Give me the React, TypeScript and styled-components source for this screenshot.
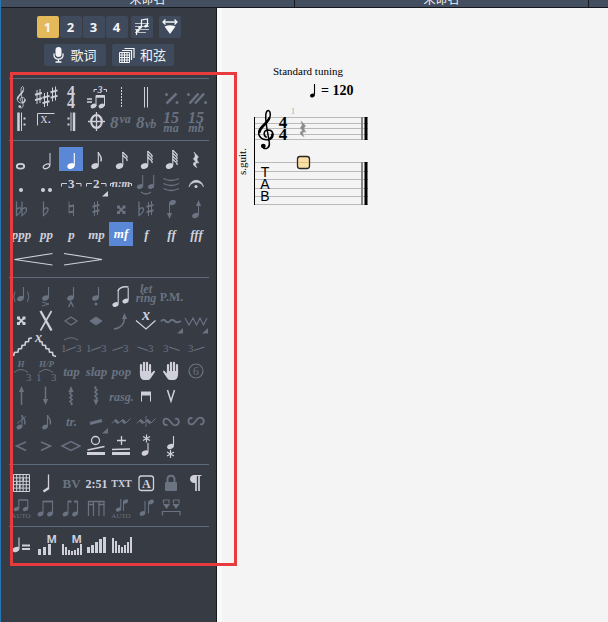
import React, { ReactNode } from "react";
import styled, { createGlobalStyle, css } from "styled-components";

const serif = '"Liberation Serif", "Times New Roman", serif';
const sans = '"Open Sans", "Noto Sans CJK SC", sans-serif';

const color = {
  panel: "#373b44",
  bar: "#434f60",
  button: "#3f4b5c",
  edge: "#15181d",
  line: "#5c6a7c",
  bright: "#cfd0dc",
  dim: "#697381",
  selected: "#5a88d6",
  voice: "#e4b95a",
  mark: "#e73b3d",
  sheet: "#f4f4f4",
};

const GlobalStyle = createGlobalStyle`
  *, *::before, *::after { box-sizing: border-box; }
  body { margin: 0; background: ${color.sheet}; }
  button { font: inherit; color: inherit; border: 0; padding: 0; background: none; cursor: pointer; }
`;

const Shell = styled.div`
  display: flex;
  flex-direction: column;
  min-height: 100vh;
  border-left: 1px solid #2877b5;
  font-family: ${sans};
`;

const TabBar = styled.nav`
  display: flex;
  height: 8px;
  overflow: hidden;
  background: ${color.bar};
  border-bottom: 1px solid ${color.edge};
`;

const Tab = styled.button`
  display: flex;
  flex: 0 0 294px;
  align-items: flex-end;
  justify-content: center;
  height: 7px;
  padding-bottom: 1px;
  overflow: hidden;
  border-right: 1px solid ${color.edge};
  color: #f2f4f6;
  font: 12px/14px "Noto Sans CJK SC", sans-serif;
`;

const Workspace = styled.div`
  display: flex;
  flex: 1;
`;

const Sidebar = styled.aside`
  display: flex;
  flex-direction: column;
  flex: 0 0 216px;
  padding-top: 8px;
  background: ${color.panel};
  border-right: 1px solid ${color.edge};
`;

const HeaderRow = styled.div`
  display: flex;
  justify-content: center;
  gap: 6px;
  margin-bottom: 6px;
`;

const VoiceGroup = styled.div`
  display: flex;
  gap: 1px;
  margin-right: -3px;
`;

const headerButton = css`
  display: flex;
  align-items: center;
  justify-content: center;
  height: 22px;
  background: ${color.button};
  color: #f4f5f7;
`;

const VoiceButton = styled.button<{ $active?: boolean }>`
  ${headerButton}
  width: 22px;
  border-radius: 2px;
  font: 700 13px/22px ${sans};
  ${(p) => p.$active && css`background: ${color.voice};`}
`;

const IconButton = styled.button`
  ${headerButton}
  width: 22px;
  border-radius: 2px;
`;

const WideButton = styled.button`
  ${headerButton}
  width: 62px;
  gap: 5px;
  border-radius: 2px;
  font: 13px/22px "Noto Sans CJK SC", sans-serif;
`;

const Palette = styled.div`
  position: relative;
  margin-top: 6px;
  padding-left: 8px;
`;

const Highlight = styled.div`
  position: absolute;
  inset: -6px -21px -3px 9px;
  border: 3px solid ${color.mark};
  pointer-events: none;
`;

const Section = styled.section`
  display: grid;
  grid-template-columns: repeat(8, 25px);
  grid-auto-rows: 25px;
  width: 200px;
  padding: 6px 0 5px;
  border-top: 1px solid ${color.line};
`;

const ToolButton = styled.button<{ $dim?: boolean; $active?: boolean; $wide?: boolean; $size?: number; $upright?: boolean }>`
  display: flex;
  align-items: center;
  justify-content: center;
  grid-column: span ${(p) => (p.$wide ? 2 : 1)};
  color: ${(p) => (p.$active ? "#ffffff" : p.$dim ? color.dim : color.bright)};
  font: ${(p) => (p.$upright ? "normal" : "italic")} 700 ${(p) => p.$size ?? 13}px/24px ${serif};
  white-space: nowrap;
  ${(p) => p.$active && css`
    background: ${color.selected};
    background-clip: content-box;
    padding: 0 1px 1px 0;
  `}
  svg { flex: none; display: block; overflow: visible; }
`;

const Blank = styled.span`
  grid-column: span 1;
`;

const Sheet = styled.main`
  flex: 1;
  min-width: 0;
  padding: 56px 0 0 15px;
  background: ${color.sheet};
  border-left: 5px solid #f9f9f9;
  color: #000;
`;

const Tuning = styled.h1`
  margin: 0;
  padding-left: 36px;
  font: 400 11px/14px ${serif};
`;

const Tempo = styled.div`
  display: flex;
  align-items: center;
  gap: 5px;
  padding-left: 73px;
  margin-top: 4px;
  font: 700 14px/18px ${serif};
`;

const StaffDrawing = styled.svg`
  display: block;
  margin-top: 5px;
  overflow: visible;
`;

/* ---------- drawing helpers ---------- */

const Ico = ({ children, w = 25 }: { children: ReactNode; w?: number }) => (
  <svg width={w} height={25} viewBox={`0 0 ${w} 25`} fill="none" stroke="currentColor" strokeWidth={1} aria-hidden="true">
    {children}
  </svg>
);

type GlyphProps = { x: number; y: number; size: number; children: ReactNode; italic?: boolean; plain?: boolean; mid?: boolean; family?: string };
const T = ({ x, y, size, children, italic, plain, mid, family = serif }: GlyphProps) => (
  <text
    x={x}
    y={y}
    fontSize={size}
    fontFamily={family}
    fontWeight={plain ? 400 : 700}
    fontStyle={italic ? "italic" : "normal"}
    textAnchor={mid ? "middle" : "start"}
    fill="currentColor"
    stroke="none"
  >
    {children}
  </text>
);

const Head = ({ x, y, r = 4 }: { x: number; y: number; r?: number }) => (
  <ellipse cx={x} cy={y} rx={r} ry={r * 0.72} transform={`rotate(-25 ${x} ${y})`} fill="currentColor" stroke="none" />
);

const Note = ({ x, y, top, r = 3.8, flags = 0 }: { x: number; y: number; top: number; r?: number; flags?: number }) => {
  const sx = x + r - 0.5;
  return (
    <>
      <Head x={x} y={y} r={r} />
      <path d={`M${sx} ${y - 1}V${top}`} strokeWidth={1.1} />
      {Array.from({ length: flags }, (_, i) => (
        <path
          key={i}
          d={
            flags === 1
              ? `M${sx} ${top}c.5 3.5 4.6 4.5 2.6 9.5`
              : `M${sx} ${top + i * 3}c.5 2.5 5 2.5 4.3 6`
          }
          strokeWidth={1.3}
        />
      ))}
    </>
  );
};

const Sharp = ({ x, y }: { x: number; y: number }) => (
  <g transform={`translate(${x} ${y})`}>
    <path d="M-1.5-6.5V7.5M1.5-7.5V6.5" />
    <path d="M-3.5-1.8L3.5-3.6M-3.5 3.6L3.5 1.8" strokeWidth={2} />
  </g>
);

const Flat = ({ x, y }: { x: number; y: number }) => (
  <path d={`M${x} ${y - 10}V${y + 4}C${x + 3} ${y + 2} ${x + 5} ${y} ${x + 4.5} ${y - 2.5}C${x + 4} ${y - 4.5} ${x + 1} ${y - 4} ${x} ${y - 1.5}`} strokeWidth={1.3} />
);

const Clef = () => (
  <>
    <path d="M9.2 28C5.5 26.5 5.8 20.5 10.5 20.5C16.5 20.5 17.5 29 10.5 30.2C4.5 31 .8 27 1.2 22.5C1.8 16 12.5 12.5 12.8 5.5C12.9 .5 9.8-.5 8.6 3.5C7.5 7.5 8.3 12 9.2 17.5L11.8 33C12.6 38.5 8.5 40 5.8 38.5" strokeWidth={1.5} />
    <path d="M1.8 23.5C2.2 17 10.5 14 12 8M14.8 24C15.3 27 13.5 29.5 10.5 30" strokeWidth={2.4} />
    <circle cx="5.8" cy="36.6" r="2.4" fill="currentColor" stroke="none" />
  </>
);

const Rest = () => (
  <path d="M1 0L5.5 5C3.5 7 3.5 8 6 11C2.5 10.2 1.6 12.6 4 15.6C-.8 13.6-.6 9.8 3 10L.3 6.8C2.7 4.8 2.4 3 1 0Z" fill="currentColor" strokeWidth={0.5} />
);

const Corner = () => <path d="M24 19V24.5H18Z" fill="currentColor" stroke="none" />;
const DoubleSharp = () => (
  <>
    <path d="M9 9.5L15.5 16M15.5 9.5L9 16" strokeWidth={1.8} />
    <path d="M8 8.5h3v3H8zM13.5 8.5h3v3h-3zM8 14h3v3H8zM13.5 14h3v3h-3z" fill="currentColor" stroke="none" />
  </>
);
const Up = ({ x, y }: { x: number; y: number }) => <path d={`M${x} ${y}l2.6 6h-5.2z`} fill="currentColor" stroke="none" />;
const Down = ({ x, y }: { x: number; y: number }) => <path d={`M${x} ${y}l2.6-6h-5.2z`} fill="currentColor" stroke="none" />;
const Star = ({ x, y }: { x: number; y: number }) => <path d={`M${x} ${y - 4}v8M${x - 3.5} ${y - 2}l7 4M${x - 3.5} ${y + 2}l7-4`} strokeWidth={1.2} />;
const Hand = () => (
  <>
    <path d="M7 13.5V6M10 13V3.8M13 13V3.8M16 13.5V6" strokeWidth={2.2} strokeLinecap="round" />
    <path d="M5.9 12H17.1V14.5L19.5 12C20.5 11.3 21.5 12.2 20.8 13.2L16.5 19.5Q15.5 21 13.5 21H9.5Q5.9 20 5.9 15Z" fill="currentColor" stroke="none" />
  </>
);
const Mordent = () => (
  <>
    <path d="M3 14.5L6.5 10.5L10 14L13.5 10.5L17 14L21.5 9.5" />
    <path d="M6 11L9.5 14.2M13 11L16.5 14.2" strokeWidth={2.6} />
  </>
);
const Turn = () => (
  <path d="M8.5 9.5C6 8 4.3 10 4.5 12.5C4.8 16 8.5 16.5 11 13C13.5 9 16 7.5 18.5 9.5C21 12 19.5 16.5 16 15" strokeWidth={1.8} />
);
const Slide = ({ one, arc }: { one?: boolean; arc?: boolean }) => (
  <Ico>
    {one && <T x={2} y={18} size={11} plain>1</T>}
    <path d="M7 16.5L17 13" strokeWidth={1.3} />
    <T x={17} y={18} size={11} plain>3</T>
    {arc && <path d="M5 6Q12 1.5 19 6" />}
  </Ico>
);

/* ---------- palette content ---------- */

type Item = {
  name: string;
  icon?: ReactNode;
  text?: string;
  size?: number;
  upright?: boolean;
  dim?: boolean;
  active?: boolean;
  wide?: boolean;
  blank?: boolean;
};

const bars = (list: number[], x0: number, step: number, width: number, bottom: number) =>
  list.map((top, i) => <rect key={i} x={x0 + i * step} y={top} width={width} height={bottom - top} fill="currentColor" stroke="none" />);

const sections: Item[][] = [
  [
    { name: "Clef", icon: <Ico><g transform="translate(7.5 1) scale(.56)" strokeWidth={2}><Clef /></g></Ico> },
    { name: "Key signature", icon: <Ico><Sharp x={4.5} y={11.5} /><Sharp x={12} y={14.5} /><Sharp x={20} y={9} /></Ico> },
    { name: "Time signature", icon: <Ico><T x={12} y={12} size={16} mid>4</T><T x={12} y={23} size={16} mid>4</T></Ico> },
    {
      name: "Triplet feel",
      icon: <Ico><path d="M3 14h5M3 17h5" strokeWidth={1.3} /><T x={13.5} y={8} size={10} italic>3</T><path d="M10 7V4.5H13M19.5 4.5H22.5V7" /><Head x={9.5} y={21} r={3} /><Head x={17.5} y={21} r={3} /><path d="M12 21V10.5H20.5V21" /><path d="M12 11.5h8.5" strokeWidth={2.5} /></Ico>,
    },
    { name: "Free time", icon: <Ico><path d="M12.5 2V23" strokeDasharray="2 1" /></Ico> },
    { name: "Double bar", icon: <Ico><path d="M10.5 2V22.5M13.5 2V22.5" /></Ico> },
    { name: "Repeat bar", dim: true, icon: <Ico><path d="M7.5 18.5L17.5 8.5" strokeWidth={2.5} /><circle cx="7.5" cy="9.5" r="1.5" fill="currentColor" stroke="none" /><circle cx="18" cy="17.5" r="1.5" fill="currentColor" stroke="none" /></Ico> },
    { name: "Repeat two bars", dim: true, icon: <Ico><path d="M5.5 18.5L14.5 8.5M11 18.5L20 8.5" strokeWidth={2.5} /><circle cx="4.5" cy="9.5" r="1.5" fill="currentColor" stroke="none" /><circle cx="21.5" cy="17.5" r="1.5" fill="currentColor" stroke="none" /></Ico> },
    { name: "Repeat start", icon: <Ico><path d="M9.5 2.5V21" strokeWidth={2.5} /><path d="M12.5 2.5V21" /><path d="M14.5 8.5h2M14.5 14.5h2" strokeWidth={2} /></Ico> },
    { name: "Alternate ending", icon: <Ico><path d="M3.5 15.5V3.5H20.5" /><T x={6.5} y={13} size={14} plain>x.</T></Ico> },
    { name: "Repeat end", icon: <Ico><path d="M15 2.5V21" strokeWidth={2.5} /><path d="M12 2.5V21" /><path d="M8.5 8.5h2M8.5 14.5h2" strokeWidth={2} /></Ico> },
    { name: "Coda", icon: <Ico><ellipse cx="12.5" cy="11.5" rx="5.3" ry="6.3" strokeWidth={2.2} /><path d="M4 11.5h17M12.5 2v19" strokeWidth={1.3} /></Ico> },
    { name: "Octave up", dim: true, icon: <Ico><T x={1} y={18} size={17} italic>8</T><T x={10.5} y={13} size={12} italic>va</T></Ico> },
    { name: "Octave down", dim: true, icon: <Ico><T x={2} y={18} size={17} italic>8</T><T x={11} y={18} size={12} italic>vb</T></Ico> },
    { name: "Two octaves up", dim: true, icon: <Ico><T x={12} y={13} size={16} mid italic>15</T><T x={12} y={22} size={12} mid italic>ma</T></Ico> },
    { name: "Two octaves down", dim: true, icon: <Ico><T x={12} y={13} size={16} mid italic>15</T><T x={12} y={22} size={12} mid italic>mb</T></Ico> },
  ],
  [
    { name: "Whole note", icon: <Ico><ellipse cx="11.5" cy="19.3" rx="3.7" ry="2.4" strokeWidth={1.8} /></Ico> },
    { name: "Half note", icon: <Ico><ellipse cx="12.5" cy="19.3" rx="3.4" ry="2" strokeWidth={1.3} transform="rotate(-25 12.5 19.3)" /><path d="M16 18V6" /></Ico> },
    { name: "Quarter note", active: true, icon: <Ico><Note x={12} y={19} top={6} /></Ico> },
    { name: "Eighth note", icon: <Ico><Note x={11} y={19} top={5} flags={1} /></Ico> },
    { name: "Sixteenth note", icon: <Ico><Note x={10.5} y={19} top={5} flags={2} /></Ico> },
    { name: "Thirty-second note", icon: <Ico><Note x={10.5} y={19} top={4} flags={3} /></Ico> },
    { name: "Sixty-fourth note", icon: <Ico><Note x={10.5} y={19} top={3} flags={4} /></Ico> },
    { name: "Rest", icon: <Ico><g transform="translate(9 5)"><Rest /></g></Ico> },
    { name: "Dotted", icon: <Ico><circle cx="12" cy="18" r="2" fill="currentColor" stroke="none" /></Ico> },
    { name: "Double dotted", icon: <Ico><circle cx="9" cy="18" r="2" fill="currentColor" stroke="none" /><circle cx="16" cy="18" r="2" fill="currentColor" stroke="none" /></Ico> },
    { name: "Triplet", icon: <Ico><path d="M2.5 14.5V11.5H8M17 11.5H22V14.5" /><T x={12.3} y={15.5} size={13} mid>3</T></Ico> },
    { name: "Tuplet", icon: <Ico><path d="M2.5 14.5V11.5H8M17 11.5H22V14.5" /><T x={12.3} y={15.5} size={13} mid>2</T><Corner /></Ico> },
    { name: "Custom tuplet", icon: <Ico><path d="M1.5 14V11.5H4M20.5 11.5H22.5V14" /><T x={12} y={14.5} size={11} mid italic>n:m</T></Ico> },
    { name: "Tie", dim: true, icon: <Ico><Note x={6} y={14.5} top={3} r={3.2} /><Note x={17} y={14.5} top={3} r={3.2} /><path d="M7 20Q12 24 17 20" strokeWidth={1.3} /></Ico> },
    { name: "Tie chord", dim: true, icon: <Ico><path d="M4.5 6.5Q12 10.5 20 6.5M4.5 11.5Q12 15.5 20 11.5M4.5 16.5Q12 20.5 20 16.5" strokeWidth={1.3} /></Ico> },
    { name: "Fermata", icon: <Ico><path d="M5 15C6.5 6 18 6 19.5 15C17 8.8 7.5 8.8 5 15Z" fill="currentColor" strokeWidth={0.5} /><circle cx="12" cy="14.5" r="1.5" fill="currentColor" stroke="none" /></Ico> },
    { name: "Double flat", dim: true, icon: <Ico><Flat x={7.5} y={14.5} /><Flat x={13} y={14.5} /></Ico> },
    { name: "Flat", dim: true, icon: <Ico><Flat x={9.5} y={14.5} /></Ico> },
    { name: "Natural", dim: true, icon: <Ico><path d="M10 4.5V16M14.5 7.5V19" /><path d="M10 9.5L14.5 8.5M10 15.5L14.5 14.5" strokeWidth={2} /></Ico> },
    { name: "Sharp", dim: true, icon: <Ico><Sharp x={12} y={11.5} /></Ico> },
    { name: "Double sharp", dim: true, icon: <Ico><DoubleSharp /></Ico> },
    { name: "Enharmonic", dim: true, icon: <Ico><Flat x={5} y={14.5} /><Sharp x={16} y={11.5} /></Ico> },
    { name: "Semitone down", dim: true, icon: <Ico><Head x={13.5} y={5.5} r={3.5} /><path d="M10.5 6.5V17" /><Down x={10.5} y={22} /></Ico> },
    { name: "Semitone up", dim: true, icon: <Ico><Head x={11.5} y={18.5} r={3.5} /><path d="M14.5 17.5V7" /><Up x={14.5} y={3} /></Ico> },
    { name: "Pianississimo", text: "ppp" },
    { name: "Pianissimo", text: "pp" },
    { name: "Piano", text: "p" },
    { name: "Mezzo piano", text: "mp" },
    { name: "Mezzo forte", text: "mf", active: true },
    { name: "Forte", text: "f" },
    { name: "Fortissimo", text: "ff" },
    { name: "Fortississimo", text: "fff" },
    { name: "Crescendo", wide: true, icon: <Ico w={50}><path d="M43.5 6.5L5.5 12.5L43.5 18" strokeWidth={1.2} /></Ico> },
    { name: "Decrescendo", wide: true, icon: <Ico w={50}><path d="M5 6.5L43 12.5L5 18" strokeWidth={1.2} /></Ico> },
  ],
  [
    { name: "Ghost note", dim: true, icon: <Ico><Note x={11.5} y={14.5} top={3} r={3.5} /><path d="M6 7.5Q3.5 12.5 6 18M18.5 7.5Q21 12.5 18.5 18" /></Ico> },
    { name: "Accent", dim: true, icon: <Ico><Note x={11.5} y={14} top={3} r={3.5} /><path d="M8 18L15 20L8 22" /></Ico> },
    { name: "Heavy accent", dim: true, icon: <Ico><Note x={11.5} y={14} top={3} r={3.5} /><path d="M9.5 23L12 18L14.5 23" strokeWidth={1.3} /></Ico> },
    { name: "Staccato", dim: true, icon: <Ico><Note x={11.5} y={14} top={3} r={3.5} /><circle cx="12" cy="20" r="1.5" fill="currentColor" stroke="none" /></Ico> },
    { name: "Legato", icon: <Ico><Note x={6.5} y={20.5} top={6} r={3.2} /><Note x={16.5} y={17} top={4} r={3.2} /><path d="M9 7Q11 2 19.5 3" strokeWidth={1.5} /></Ico> },
    { name: "Let ring", dim: true, icon: <Ico><T x={12} y={9} size={12} mid italic>let</T><T x={12} y={18} size={12} mid italic>ring</T></Ico> },
    { name: "Palm mute", text: "P.M.", upright: true, size: 12, dim: true },
    { name: "", blank: true },
    { name: "Dead note", icon: <Ico><g transform="translate(0 -1)"><DoubleSharp /></g></Ico> },
    { name: "Slap body", icon: <Ico><path d="M6.5 2L17.5 21.5" strokeWidth={2.4} /><path d="M17.5 2L6.5 21.5" strokeWidth={1.6} /></Ico> },
    { name: "Natural harmonic", dim: true, icon: <Ico><path d="M6 12L12 8L18 12L12 16Z" strokeWidth={1.2} /></Ico> },
    { name: "Artificial harmonic", dim: true, icon: <Ico><path d="M6 12L12 8L18 12L12 16Z" fill="currentColor" /></Ico> },
    { name: "Bend", dim: true, icon: <Ico><path d="M5 20Q15 19 15.5 9" strokeWidth={1.5} /><Up x={15.5} y={4} /></Ico> },
    { name: "Whammy bar", icon: <Ico><T x={12} y={11} size={16} mid italic>x</T><path d="M2 11.5L12 20L21.5 11.5" strokeWidth={1.2} /></Ico> },
    { name: "Vibrato", dim: true, icon: <Ico><path d="M2 12.5Q4 9.5 6.5 12T11 12T15.5 12T22 12" strokeWidth={2} /><Corner /></Ico> },
    { name: "Wide vibrato", dim: true, icon: <Ico><path d="M1 9L5 16L9 9L12.5 16L16 9L19.5 16L23 9" strokeWidth={1.2} /><Corner /></Ico> },
    { name: "Slide in above", icon: <Ico><path d="M4.5 22L5.5 18.5L9 18L9.5 15L12.5 14.5L13 11.5L16 11L16.5 8L19.5 7.5L20 4.5L23 4" strokeWidth={1.6} /></Ico> },
    { name: "Slide out below", icon: <Ico><T x={1} y={8} size={14} italic>x</T><path d="M5 7.5L8 8L8.5 11L11.5 11.5L12 14.5L15 15L15.5 18L18.5 18.5L19 21.5L22 22.5" strokeWidth={1.6} /></Ico> },
    { name: "Legato slide", dim: true, icon: <Slide one arc /> },
    { name: "Shift slide", dim: true, icon: <Slide one /> },
    { name: "Slide in from below", dim: true, icon: <Ico><path d="M3.5 16.5L14 13" strokeWidth={1.3} /><T x={14} y={18} size={11} plain>3</T></Ico> },
    { name: "Slide in from above", dim: true, icon: <Ico><path d="M3.5 13L14 16.5" strokeWidth={1.3} /><T x={14} y={18} size={11} plain>3</T></Ico> },
    { name: "Slide out downwards", dim: true, icon: <Ico><T x={4} y={18} size={11} plain>3</T><path d="M10 13L20.5 16.5" strokeWidth={1.3} /></Ico> },
    { name: "Slide out upwards", dim: true, icon: <Ico><T x={4} y={18} size={11} plain>3</T><path d="M10 16.5L20.5 13" strokeWidth={1.3} /></Ico> },
    { name: "Hammer on", dim: true, icon: <Ico><T x={12} y={8} size={9} mid italic>H</T><path d="M5 13.5Q12 7.5 19 13.5" /><T x={17} y={22} size={11} plain>3</T></Ico> },
    { name: "Hammer on or pull off", dim: true, icon: <Ico><T x={12.5} y={8} size={9} mid italic>H/P</T><path d="M5 13.5Q12 7.5 19 13.5" /><T x={2} y={22} size={11} plain>1</T><T x={17} y={22} size={11} plain>3</T></Ico> },
    { name: "Tapping", text: "tap", dim: true },
    { name: "Slapping", text: "slap", dim: true },
    { name: "Popping", text: "pop", dim: true },
    { name: "Left hand fingering", icon: <Ico><Hand /></Ico> },
    { name: "Right hand fingering", icon: <Ico><g transform="translate(25 0) scale(-1 1)"><Hand /></g></Ico> },
    { name: "String number", dim: true, icon: <Ico><circle cx="12" cy="12" r="7" strokeWidth={1.2} /><T x={12} y={16} size={12} mid plain>6</T></Ico> },
    { name: "Arpeggio up", dim: true, icon: <Ico><path d="M12.5 7V21" strokeWidth={1.5} /><Up x={12.5} y={2} /></Ico> },
    { name: "Arpeggio down", dim: true, icon: <Ico><path d="M11.5 2.5V16" strokeWidth={1.5} /><Down x={11.5} y={21} /></Ico> },
    { name: "Brush up", dim: true, icon: <Ico><path d="M12 8l-1 1.5l2 2l-2 2l2 2l-2 2l2 2l-1 1.5" strokeWidth={1.7} /><Up x={12} y={2} /></Ico> },
    { name: "Brush down", dim: true, icon: <Ico><path d="M12 2.5l-1 1.5l2 2l-2 2l2 2l-2 2l2 2l-1 1.5" strokeWidth={1.7} /><Down x={12} y={21.5} /></Ico> },
    { name: "Rasgueado", text: "rasg.", size: 12, dim: true },
    { name: "Down stroke", icon: <Ico><path d="M7.5 17.5V8M16.5 17.5V8" /><path d="M7 9.5H17" strokeWidth={4} /></Ico> },
    { name: "Up stroke", icon: <Ico><path d="M8.5 6L12 17L15.5 6" strokeWidth={1.5} /></Ico> },
    { name: "", blank: true },
    { name: "Grace note before beat", dim: true, icon: <Ico><Note x={10.5} y={18} top={6} r={3} flags={1} /><path d="M8 14.5L17 7.5" /></Ico> },
    { name: "Grace note on beat", dim: true, icon: <Ico><Note x={11} y={18} top={6} r={3} flags={1} /></Ico> },
    { name: "Trill", text: "tr.", dim: true },
    { name: "Tremolo picking", dim: true, icon: <Ico><path d="M6 14.5L18 11.5" strokeWidth={3} /><Corner /></Ico> },
    { name: "Upper mordent", dim: true, icon: <Ico><Mordent /></Ico> },
    { name: "Lower mordent", dim: true, icon: <Ico><Mordent /><path d="M12 7V18" /></Ico> },
    { name: "Turn", dim: true, icon: <Ico><g transform="translate(0 25) scale(1 -1)"><Turn /></g></Ico> },
    { name: "Inverted turn", dim: true, icon: <Ico><Turn /></Ico> },
    { name: "Fade in", dim: true, icon: <Ico><path d="M17 8L7.5 12L17 16.5" strokeWidth={1.5} /></Ico> },
    { name: "Fade out", dim: true, icon: <Ico><path d="M7 8L16.5 12L7 16.5" strokeWidth={1.5} /></Ico> },
    { name: "Volume swell", dim: true, icon: <Ico><path d="M3 12L12 7.5L21 12L12 16.5Z" strokeWidth={1.4} /></Ico> },
    { name: "Wah open", icon: <Ico><circle cx="11.5" cy="6.5" r="4" strokeWidth={1.3} /><path d="M3.5 16L20.5 12.5" strokeWidth={1.5} /><path d="M3 19.5H21" strokeWidth={3} /></Ico> },
    { name: "Wah closed", icon: <Ico><path d="M12.5 2V11M8 6.5H17" strokeWidth={1.3} /><path d="M3 15.5L21 15" strokeWidth={1.5} /><path d="M3 19.5H21" strokeWidth={3} /></Ico> },
    { name: "Pick scrape above", icon: <Ico><Star x={12.5} y={4.5} /><Note x={11} y={19} top={9} r={3.5} /></Ico> },
    { name: "Pick scrape below", icon: <Ico><Note x={11.5} y={12.5} top={2} r={3.5} /><Star x={11.5} y={20} /></Ico> },
  ],
  [
    { name: "Chord diagram", icon: <Ico><path d="M4.5 3.5H20.5V20.5H4.5ZM7.7 3.5V20.5M10.9 3.5V20.5M14.1 3.5V20.5M17.3 3.5V20.5M4.5 6.9H20.5M4.5 10.3H20.5M4.5 13.7H20.5M4.5 17.1H20.5" /><path d="M7 12h1.5M13.5 8.5h1.5M10 15.5h1.5" strokeWidth={2.5} /></Ico> },
    { name: "Slash notation", icon: <Ico><path d="M14.5 3.5V17.5" strokeWidth={1.3} /><path d="M9.5 20.5L14.8 17" strokeWidth={2.5} /></Ico> },
    { name: "Barre", text: "BV", size: 13, upright: true, dim: true },
    { name: "Timer", text: "2:51", size: 12, upright: true },
    { name: "Text", text: "TXT", size: 10, upright: true },
    { name: "Section marker", icon: <Ico><rect x="5" y="5" width="14.5" height="14.5" rx="2.5" strokeWidth={1.3} /><T x={12.3} y={16.5} size={12} mid>A</T></Ico> },
    { name: "Lock", dim: true, icon: <Ico><path d="M8.500 12V8.5C8.5 3.5 15.5 3.5 15.5 8.5V12" strokeWidth={2} /><rect x="6" y="11" width="12" height="9" rx="1" fill="currentColor" stroke="none" /></Ico> },
    { name: "Line break", icon: <Ico><path d="M12 4H10.5C4.5 4 4.5 12 10.5 12H12Z" fill="currentColor" stroke="none" /><path d="M12 4V20M15 4V20" strokeWidth={1.7} /><path d="M10 4.5H17.5" /></Ico> },
    { name: "Automatic beaming", dim: true, icon: <Ico><Note x={7.5} y={13} top={4} r={2.8} /><Note x={16.5} y={13} top={4} r={2.8} /><path d="M9.5 4H19" strokeWidth={1.5} /><T x={12} y={21.5} size={7} mid plain>AUTO</T></Ico> },
    { name: "Join beams", dim: true, icon: <Ico><Note x={6.5} y={18} top={5} r={3} /><Note x={16} y={18} top={5} r={3} /><path d="M9 5.5H19" strokeWidth={1.8} /></Ico> },
    { name: "Break beams", dim: true, icon: <Ico><Note x={6.5} y={18} top={5} r={3} /><Note x={16} y={18} top={5} r={3} /><path d="M9 5.5H12.5M15 5.5H19" strokeWidth={1.8} /></Ico> },
    { name: "Break secondary beams", dim: true, icon: <Ico><path d="M4 5.5H20.5M4 8.5H10M14.5 8.5H20.5" strokeWidth={1.5} /><path d="M4.5 5V20M9.5 5V20M15 5V20M20 5V20" strokeWidth={1.2} /></Ico> },
    { name: "Automatic stems", dim: true, icon: <Ico><Note x={9.5} y={13.5} top={3} r={2.8} /><Head x={16.5} y={5.5} r={2.8} /><path d="M14.5 6V15" /><T x={12} y={21.5} size={7} mid plain>AUTO</T></Ico> },
    { name: "Invert stems", dim: true, icon: <Ico><Note x={8.5} y={17.5} top={5} r={3} /><Head x={17} y={6} r={3} /><path d="M14.5 6.5V17.5" /></Ico> },
    { name: "Spacing", dim: true, icon: <Ico><path d="M4.5 7.5V4H10V7.5M14.5 7.5V4H20V7.5M3.5 19.5V15.5H21V19.5" strokeWidth={1.2} /><path d="M4 8h7l-3.5 5zM13.5 8h7l-3.5 5z" fill="currentColor" stroke="none" /></Ico> },
  ],
  [
    { name: "Tempo automation", icon: <Ico><Note x={7} y={16.5} top={4.5} r={3.5} /><path d="M13 12.5h8M13 16h8" strokeWidth={1.8} /></Ico> },
    { name: "Master volume", icon: <Ico>{bars([16, 14, 11], 4, 5, 3, 22)}<T x={12.5} y={10} size={11} family={sans}>M</T></Ico> },
    { name: "Master balance", icon: <Ico>{bars([11, 14, 17, 18, 17, 15, 11], 3, 3, 2, 22)}<T x={12.5} y={10} size={11} family={sans}>M</T></Ico> },
    { name: "Track volume", icon: <Ico>{bars([14, 12, 9, 6, 4], 3, 4, 3, 20)}</Ico> },
    { name: "Track balance", icon: <Ico>{bars([5, 8, 12, 14, 12, 9, 4], 3, 3, 2, 20)}</Ico> },
  ],
];

const sectionNames = ["Bars", "Notes", "Effects", "Layout", "Automation"];

const Tool = ({ item }: { item: Item }) =>
  item.blank ? (
    <Blank />
  ) : (
    <ToolButton
      type="button"
      aria-label={item.name}
      $dim={item.dim}
      $active={item.active}
      $wide={item.wide}
      $size={item.size}
      $upright={item.upright}
    >
      {item.icon ?? item.text}
    </ToolButton>
  );

const Header = () => (
  <>
    <HeaderRow>
      <VoiceGroup>
        {[1, 2, 3, 4].map((n) => (
          <VoiceButton key={n} type="button" $active={n === 1}>{n}</VoiceButton>
        ))}
      </VoiceGroup>
      <IconButton type="button" aria-label="Multivoice">
        <svg width="18" height="18" viewBox="0 0 18 18" fill="none" stroke="currentColor" strokeWidth="1">
          <path d="M2 5.5h14M2 8.5h14M2 11.5h14M2 14.5h11" opacity=".7" />
          <Head x={7} y={9.5} r={2} /><Head x={13} y={8} r={2} />
          <path d="M8.5 9V2L14.5 1V8M3.5 17V12" strokeWidth="1.2" />
          <Head x={5} y={12.5} r={1.8} />
        </svg>
      </IconButton>
      <IconButton type="button" aria-label="Fold">
        <svg width="18" height="18" viewBox="0 0 18 18" fill="none" stroke="currentColor" strokeWidth="1.3">
          <path d="M2 4H16M4.5 1.5L2 4L4.5 6.5M13.5 1.5L16 4L13.5 6.5" />
          <path d="M3.5 8.5Q9 6 14.5 8.5L9 16Z" fill="currentColor" stroke="none" />
        </svg>
      </IconButton>
    </HeaderRow>
    <HeaderRow>
      <WideButton type="button">
        <svg width="13" height="16" viewBox="0 0 13 16" fill="none" stroke="currentColor" strokeWidth="1.3" aria-hidden="true">
          <rect x="3.5" y="0" width="6" height="10" rx="3" fill="currentColor" stroke="none" />
          <path d="M2 6.5V8C2 13.5 11 13.5 11 8V6.5M6.5 12V14.5M3.5 15H9.5" />
        </svg>
        歌词
      </WideButton>
      <WideButton type="button">
        <svg width="16" height="16" viewBox="0 0 16 16" fill="none" stroke="currentColor" strokeWidth="1" aria-hidden="true">
          <path d="M.5 5.5H10.5V15.5H.5ZM3 5.5V15.5M5.5 5.5V15.5M8 5.5V15.5M.5 8H10.5M.5 10.5H10.5M.5 13H10.5" />
          <path d="M3 3.5H12.5V13M5.5 1.5H15V11" strokeWidth="1.2" />
        </svg>
        和弦
      </WideButton>
    </HeaderRow>
  </>
);

const Staff = () => (
  <StaffDrawing width="134" height="104" viewBox="0 0 134 104" fill="none" stroke="currentColor" role="img" aria-label="Guitar staff and tablature">
    <g stroke="#b9b9b9">
      {[12.5, 18.5, 23.5, 29.5, 34.5, 57.5, 66.5, 74.5, 83.5, 91.5, 99.5].map((y) => (
        <path key={y} d={`M18 ${y}H131`} />
      ))}
      <path d="M125 12V35M125 57V100" stroke="#888" strokeWidth="2" />
    </g>
    <path d="M17.5 12V100" />
    <path d="M129 12V35M129 57V100" strokeWidth="3" />
    <g transform="translate(20.5 4.5)"><Clef /></g>
    <T x={46} y={23} size={17} mid>4</T>
    <T x={46} y={35} size={17} mid>4</T>
    <g color="#8b8b8b" stroke="currentColor" transform="translate(63 16)"><Rest /></g>
    <g color="#aaaaaa"><T x={56} y={9} size={8} mid plain>1</T></g>
    {["T", "A", "B"].map((c, i) => (
      <T key={c} x={28} y={72 + i * 12} size={14} mid plain family='"Liberation Sans", sans-serif'>{c}</T>
    ))}
    <rect x="60.5" y="51.5" width="12" height="12" rx="2.5" fill="#fbdfa8" stroke="#2b2721" strokeWidth="1.3" />
    <path d="M61.5 57.5H72" stroke="#e9bf77" />
    <g transform="translate(9 70) rotate(-90)"><T x={0} y={0} size={11} plain>s.guit.</T></g>
  </StaffDrawing>
);

export default function App() {
  return (
    <>
      <GlobalStyle />
      <Shell>
        <TabBar>
          <Tab type="button">未命名</Tab>
          <Tab type="button">未命名</Tab>
        </TabBar>
        <Workspace>
          <Sidebar>
            <Header />
            <Palette>
              {sections.map((items, s) => (
                <Section key={sectionNames[s]} aria-label={sectionNames[s]}>
                  {items.map((item, i) => (
                    <Tool key={i} item={item} />
                  ))}
                </Section>
              ))}
              <Highlight />
            </Palette>
          </Sidebar>
          <Sheet>
            <Tuning>Standard tuning</Tuning>
            <Tempo>
              <svg width="6" height="14" viewBox="0 0 6 14" fill="none" stroke="currentColor" aria-hidden="true">
                <Note x={2.5} y={11.5} top={0} r={2.5} />
              </svg>
              = 120
            </Tempo>
            <Staff />
          </Sheet>
        </Workspace>
      </Shell>
    </>
  );
}
